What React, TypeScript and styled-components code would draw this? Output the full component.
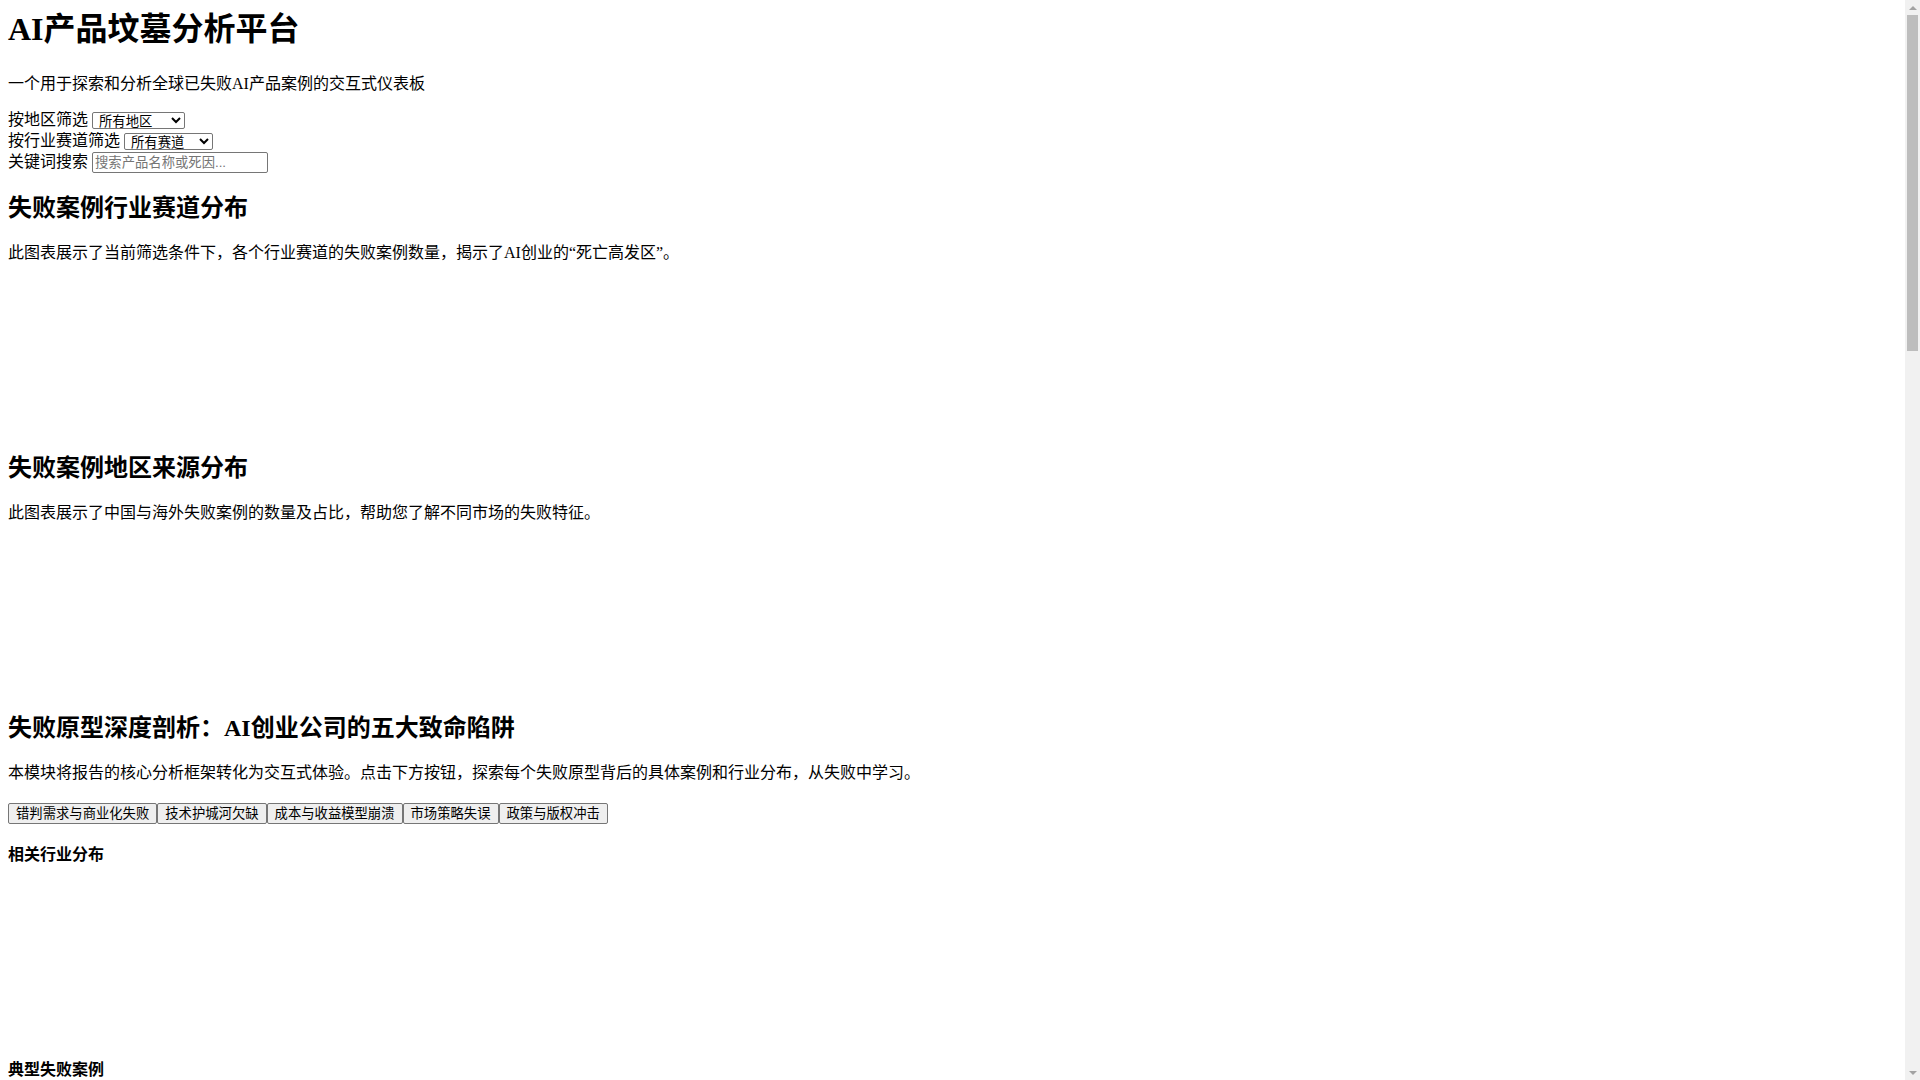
import styled, { createGlobalStyle } from "styled-components";

const GlobalStyle = createGlobalStyle`
  html, body {
    margin: 0;
    padding: 0;
    background: #ffffff;
  }
  body {
    color: #000000;
    font-family: "Liberation Serif", "Noto Sans CJK SC", serif;
    font-size: 16px;
    line-height: 1.28;
  }
`;

// the window scrollbar of the long page, drawn over the right edge
const ScrollTrack = styled.div`
  position: fixed;
  top: 0;
  right: 0;
  width: 15px;
  height: 100vh;
  background: #f1f1f1;
  display: flex;
  flex-direction: column;
  align-items: center;
`;

const ScrollArrow = styled.div<{ down?: boolean }>`
  width: 15px;
  height: 15px;
  display: flex;
  align-items: center;
  justify-content: center;
  margin-top: ${(p) => (p.down ? "auto" : "0")};
  &::after {
    content: "";
    width: 0;
    height: 0;
    border-left: 4px solid transparent;
    border-right: 4px solid transparent;
    ${(p) => (p.down ? "border-top: 4px solid #a3a3a3;" : "border-bottom: 4px solid #a3a3a3;")}
  }
`;

const ScrollThumb = styled.div`
  width: 11px;
  height: 336px;
  background: #bdbdbd;
`;

const Page = styled.div`
  padding: 8px;
`;

const Title = styled.h1`
  font-size: 32px;
  font-weight: bold;
  line-height: 1.28;
  margin: 1px 0 23.8px;
`;

const Lead = styled.p`
  margin: 16px 0;
`;

const Filters = styled.div`
  display: flex;
  flex-direction: column;
  margin-bottom: 3.6px;
`;

const FilterRow = styled.div`
  height: 20.8px;
  display: flex;
  align-items: center;
  gap: 4px;
`;

const Select = styled.select<{ w: number }>`
  box-sizing: border-box;
  width: ${(p) => p.w}px;
  height: 17px;
  padding: 0 0 0 2px;
  font-family: "Liberation Sans", "Noto Sans CJK SC", sans-serif;
  font-size: 13.333px;
  line-height: 15px;
  color: #000;
  background: #fff;
  border: 1px solid #767676;
  border-radius: 2px;
`;

const SearchInput = styled.input`
  box-sizing: border-box;
  width: 176px;
  height: 21px;
  padding: 1px 2px;
  font-family: "Liberation Sans", "Noto Sans CJK SC", sans-serif;
  font-size: 13.333px;
  border: 1px solid #767676;
  border-radius: 2px;
  &::placeholder {
    color: #757575;
  }
`;

const SectionTitle = styled.h2`
  font-size: 24px;
  font-weight: bold;
  margin: 19.92px 0;
`;

const SubTitle = styled.h4`
  font-size: 16px;
  font-weight: bold;
  margin: 21.28px 0;
`;

const ChartBox = styled.div<{ h: number }>`
  height: ${(p) => p.h}px;
`;

const ButtonRow = styled.div`
  display: flex;
  padding-top: 3px;
`;

const ArchetypeButton = styled.button`
  font-family: "Liberation Sans", "Noto Sans CJK SC", sans-serif;
  font-size: 13.333px;
  line-height: 15px;
  padding: 2px 7px;
  color: #000;
  background: #efefef;
  border: 1px solid #767676;
  border-radius: 2px;
`;

const CaseList = styled.div`
  min-height: 2280px;
`;

const archetypes = [
  "错判需求与商业化失败",
  "技术护城河欠缺",
  "成本与收益模型崩溃",
  "市场策略失误",
  "政策与版权冲击",
];

export default function App() {
  return (
    <>
      <GlobalStyle />
      <Page>
        <Title>AI产品坟墓分析平台</Title>
        <Lead>一个用于探索和分析全球已失败AI产品案例的交互式仪表板</Lead>
        <Filters>
          <FilterRow>
            <label htmlFor="region">按地区筛选</label>
            <Select id="region" w={93} defaultValue="all">
              <option value="all">所有地区</option>
              <option value="cn">中国</option>
              <option value="os">海外</option>
            </Select>
          </FilterRow>
          <FilterRow>
            <label htmlFor="track">按行业赛道筛选</label>
            <Select id="track" w={89} defaultValue="all">
              <option value="all">所有赛道</option>
            </Select>
          </FilterRow>
          <FilterRow>
            <label htmlFor="kw">关键词搜索</label>
            <SearchInput id="kw" type="text" placeholder="搜索产品名称或死因..." />
          </FilterRow>
        </Filters>

        <SectionTitle>失败案例行业赛道分布</SectionTitle>
        <Lead>此图表展示了当前筛选条件下，各个行业赛道的失败案例数量，揭示了AI创业的“死亡高发区”。</Lead>
        <ChartBox h={153} />

        <SectionTitle>失败案例地区来源分布</SectionTitle>
        <Lead>此图表展示了中国与海外失败案例的数量及占比，帮助您了解不同市场的失败特征。</Lead>
        <ChartBox h={153} />

        <SectionTitle>失败原型深度剖析：AI创业公司的五大致命陷阱</SectionTitle>
        <Lead>本模块将报告的核心分析框架转化为交互式体验。点击下方按钮，探索每个失败原型背后的具体案例和行业分布，从失败中学习。</Lead>
        <ButtonRow>
          {archetypes.map((a) => (
            <ArchetypeButton key={a}>{a}</ArchetypeButton>
          ))}
        </ButtonRow>
        <SubTitle>相关行业分布</SubTitle>
        <ChartBox h={152} />
        <SubTitle>典型失败案例</SubTitle>
        <CaseList />
      </Page>
      <ScrollTrack aria-hidden>
        <ScrollArrow />
        <ScrollThumb />
        <ScrollArrow down />
      </ScrollTrack>
    </>
  );
}
